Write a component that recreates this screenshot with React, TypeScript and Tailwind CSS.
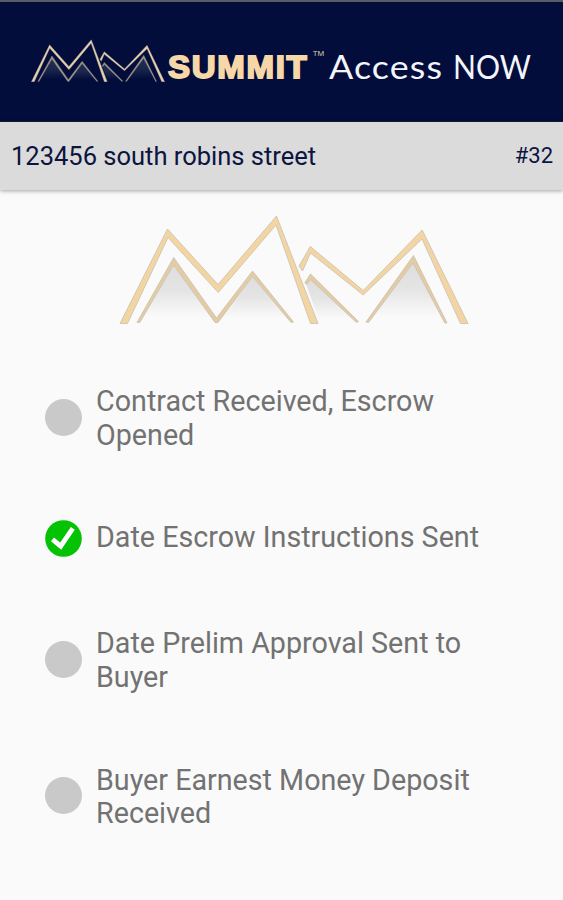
import React from 'react';

interface Step {
  label: string;
  done: boolean;
}

interface MountainLogoProps {
  id: string;
  className?: string;
  outer: string;
  inner: string;
  edge: string;
  shade: string;
  shadeOpacity: number;
}

const steps: Step[] = [
  { label: 'Contract Received, Escrow Opened', done: false },
  { label: 'Date Escrow Instructions Sent', done: true },
  { label: 'Date Prelim Approval Sent to Buyer', done: false },
  { label: 'Buyer Earnest Money Deposit Received', done: false },
];

function MountainLogo({ id, className, outer, inner, edge, shade, shadeOpacity }: MountainLogoProps) {
  return (
    <svg viewBox="0 0 350 110" className={className} preserveAspectRatio="none" aria-hidden="true">
      <defs>
        <linearGradient id={id} x1="0" y1="0" x2="0" y2="1">
          <stop offset="0" stopColor={shade} stopOpacity={shadeOpacity} />
          <stop offset="0.45" stopColor={shade} stopOpacity={shadeOpacity * 0.75} />
          <stop offset="0.9" stopColor={shade} stopOpacity="0" />
        </linearGradient>
      </defs>

      {/* Shaded slopes */}
      <g fill={`url(#${id})`}>
        <path d="M21 109 L54.5 50 L95 109 Z" />
        <path d="M101 109 L133.5 62 L171 109 Z" />
        <path d="M187 70 L191.5 64 L237 109 L201 109 Z" />
        <path d="M250 109 L294 47 L325 109 Z" />
      </g>

      {/* Inner ridges */}
      <g fill={inner} stroke={edge} strokeWidth="0.9">
        <path d="M18 108.5 L54.7 43.5 L97.5 104 L133.5 57 L174.5 108 L172 108.5 L133.5 62.5 L99 108.5 L96 108.5 L54.5 51 L20.8 108.5 Z" />
        <path d="M186 68.5 L191.5 60 L239.5 107.5 L237.5 108.5 L191.5 65.5 L187.5 70.5 Z" />
        <path d="M247 108 L294.5 41.5 L328 109 L325.8 109 L294 49 L249.5 108.5 Z" />
      </g>

      {/* Outer ridges */}
      <g fill={outer} stroke={edge} strokeWidth="0.9">
        <path d="M180 52 L191.3 32.5 L244.2 76.5 L303.2 16 L349 109.5 L341.5 109.5 L303 25 L244.2 81 L191.5 39 L183.5 57 Z" />
        <path d="M1 109.5 L48.5 15 L99 70.5 L157.5 2 L199 109.5 L191.5 109.5 L157 11 L99.2 78.5 L49 23.5 L8.5 109.5 Z" />
      </g>
    </svg>
  );
}

function StatusIcon({ done }: { done: boolean }) {
  if (!done) {
    return <div className="-mt-[3px] size-[37px] shrink-0 self-center rounded-full bg-[#c9c9c9]" />;
  }
  return (
    <svg viewBox="0 0 37 37" className="-mt-[3px] size-[37px] shrink-0 self-center">
      <circle cx="18.5" cy="18.5" r="18.3" fill="#04c204" />
      <path d="M7.5 19.3 L15.7 26.2 L27.8 8.3" fill="none" stroke="#fff" strokeWidth="4.8" />
    </svg>
  );
}

export default function App() {
  return (
    <div className="flex h-[900px] w-[563px] flex-col overflow-hidden bg-[#fafafa] font-['Roboto',sans-serif]">
      {/* Header */}
      <header className="flex h-[122px] shrink-0 items-start border-t-2 border-b border-t-[#5b5b63] border-b-[#1b1a35] bg-[#020d3b] pl-[31px]">
        <MountainLogo
          id="header-shade"
          className="mt-[37px] h-[43px] w-[134px] shrink-0"
          outer="#e6d0b0"
          inner="#9c948f"
          edge="#a89b8f"
          shade="#44546a"
          shadeOpacity={0.5}
        />
        <span className="mt-[47px] ml-[3px] w-[144px] shrink-0 origin-left scale-x-[1.065] font-['Liberation_Sans',sans-serif] text-[31px] leading-[38px] font-bold tracking-[1.6px] whitespace-nowrap text-[#f6d7a8] [-webkit-text-stroke:1.8px_#f6d7a8]">
          SUMMIT
        </span>
        <span className="mt-[45px] w-[17px] shrink-0 font-['Liberation_Sans',sans-serif] text-[13px] leading-[18px] text-[#b9ab9c]">
          ™
        </span>
        <span className="mt-[45px] w-[124px] shrink-0 origin-left scale-x-[1.12] font-['Lato',sans-serif] text-[32px] leading-[40px] tracking-[1px] text-[#f4f5fa]">
          Access
        </span>
        <span className="mt-[45px] origin-left scale-x-[0.94] font-['Lato',sans-serif] text-[32px] leading-[40px] text-[#f4f5fa]">
          NOW
        </span>
      </header>

      {/* Property bar */}
      <div className="flex h-[68px] shrink-0 items-center justify-between bg-[#dbdbdb] pr-[10px] pl-[11px] text-[#0c1440] shadow-[0_1px_4px_rgba(0,0,0,0.35)]">
        <span className="text-[25.5px] leading-[30px]">123456 south robins street</span>
        <span className="text-[22px] leading-[28px]">#32</span>
      </div>

      <MountainLogo
        id="main-shade"
        className="mt-[23.5px] ml-[119px] h-[110px] w-[350px] shrink-0"
        outer="#f3d5a3"
        inner="#e3cba4"
        edge="#cdc4b2"
        shade="#9a9a9a"
        shadeOpacity={0.3}
      />

      {/* Steps */}
      <ul className="mt-[61.8px] flex flex-col gap-[69px] pl-[45px]">
        {steps.map(step => (
          <li key={step.label} className="flex min-h-[37px] items-start gap-[14px]">
            <StatusIcon done={step.done} />
            <span className="w-[400px] text-[28.7px] leading-[33.6px] text-[#727272]">{step.label}</span>
          </li>
        ))}
      </ul>
    </div>
  );
}
